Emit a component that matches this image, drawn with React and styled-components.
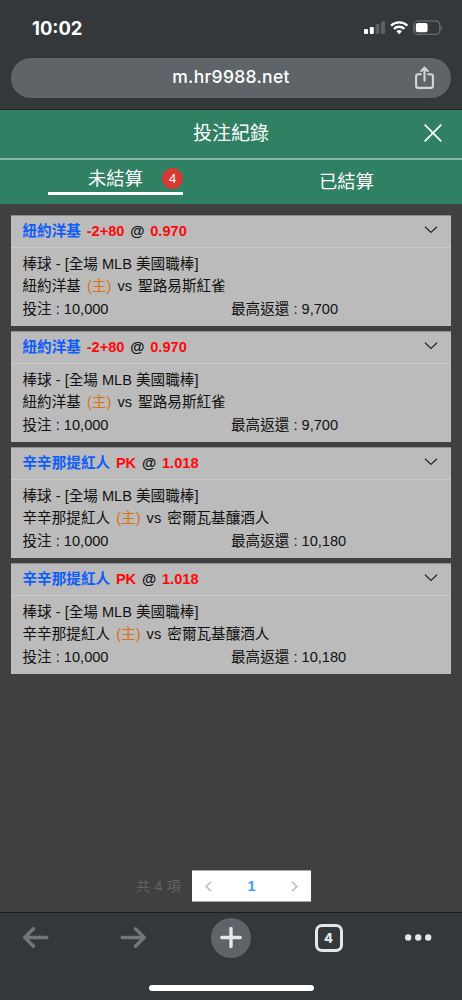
import React from 'react';
import { createGlobalStyle, styled } from 'styled-components';

const bets = [
  { id: 1, team: '紐約洋基', handicap: '-2+80', odds: '0.970', away: '聖路易斯紅雀', payout: '9,700' },
  { id: 2, team: '紐約洋基', handicap: '-2+80', odds: '0.970', away: '聖路易斯紅雀', payout: '9,700' },
  { id: 3, team: '辛辛那提紅人', handicap: 'PK', odds: '1.018', away: '密爾瓦基釀酒人', payout: '10,180' },
  { id: 4, team: '辛辛那提紅人', handicap: 'PK', odds: '1.018', away: '密爾瓦基釀酒人', payout: '10,180' },
];

function StatusIcons() {
  return (
    <svg width="80" height="16" viewBox="0 0 80 16">
      <rect x="0" y="9" width="4" height="5" rx="1" fill="#fff" />
      <rect x="5.8" y="7" width="4" height="7" rx="1" fill="#fff" />
      <rect x="11.5" y="4" width="4" height="10" rx="1" fill="#5d6061" />
      <rect x="17" y="1.2" width="4" height="12.8" rx="1" fill="#5d6061" />
      <g fill="none" stroke="#fff" strokeWidth="2.3">
        <path d="M27 5.7a11.8 11.8 0 0 1 16.4 0" />
        <path d="M30 8.9a7.4 7.4 0 0 1 10.4 0" />
      </g>
      <path d="M35.2 14.2l-2.8-2.9a4 4 0 0 1 5.6 0z" fill="#fff" />
      <rect x="49.9" y="1" width="26" height="13.2" rx="3.8" fill="none" stroke="#77797a" strokeWidth="1.1" />
      <rect x="51.8" y="2.9" width="11.8" height="9.4" rx="2" fill="#fff" />
      <path d="M77.2 5.4q2 2.2 0 4.4z" fill="#77797a" />
    </svg>
  );
}

function BetCard({ bet }) {
  return (
    <Card>
      <CardHead>
        <Pick>
          <Team>{bet.team}</Team>
          <Red>{bet.handicap}</Red>
          <span>@</span>
          <Red>{bet.odds}</Red>
        </Pick>
        <svg width="14" height="8" viewBox="0 0 14 8" fill="none" stroke="#2b2b2b" strokeWidth="1.3">
          <path d="M1 .7l6 5.7L13 .7" />
        </svg>
      </CardHead>
      <CardBody>
        <Line>棒球 - [全場 MLB 美國職棒]</Line>
        <Line $gap>
          <span>{bet.team}</span>
          <Home>(主)</Home>
          <span>vs</span>
          <span>{bet.away}</span>
        </Line>
        <Amounts>
          <span>投注 : 10,000</span>
          <span>最高返還 : {bet.payout}</span>
        </Amounts>
      </CardBody>
    </Card>
  );
}

export default function App() {
  return (
    <>
      <GlobalStyle />
      <Screen>
        <BrowserTop>
          <StatusBar>
            <Clock>10:02</Clock>
            <StatusIcons />
          </StatusBar>
          <AddressBar>
            <Url>m.hr9988.net</Url>
            <svg width="20" height="24" viewBox="0 0 20 24" fill="none" stroke="#d3d6db" strokeWidth="2.1" strokeLinecap="round" strokeLinejoin="round">
              <path d="M5.800 8.200H3.300Q1.100 8.200 1.100 10.400v9.300q0 2.200 2.200 2.200h12.400q2.200 0 2.200-2.200v-9.300q0-2.200-2.200-2.200H13.200M9.500 14.800V2M6.300 5l3.200-3.300L12.700 5" />
            </svg>
          </AddressBar>
        </BrowserTop>

        <TitleBar>
          <Title>投注紀錄</Title>
          <svg width="18" height="18" viewBox="0 0 18 18" fill="none" stroke="#fff" strokeWidth="1.7">
            <path d="M.7.7l16.600 16.600M17.300.7L.7 17.300" />
          </svg>
        </TitleBar>
        <Tabs>
          <Tab>
            <ActiveLabel>
              <span />
              <span>未結算</span>
              <Badge>4</Badge>
            </ActiveLabel>
          </Tab>
          <Tab>已結算</Tab>
        </Tabs>

        <Content>
          {bets.map((bet) => (
            <BetCard key={bet.id} bet={bet} />
          ))}
          <Pagination>
            <Total>共 4 項</Total>
            <Pager>
              <svg width="7" height="11" viewBox="0 0 7 11" fill="none" stroke="#b8bcc4" strokeWidth="1.6">
                <path d="M6 .8L1.200 5.500 6 10.200" />
              </svg>
              <PageNumber>1</PageNumber>
              <svg width="7" height="11" viewBox="0 0 7 11" fill="none" stroke="#b8bcc4" strokeWidth="1.6">
                <path d="M1 .8l4.800 4.700L1 10.200" />
              </svg>
            </Pager>
          </Pagination>
        </Content>

        <BrowserBottom>
          <Toolbar>
            <ToolItem>
              <svg width="28" height="22" viewBox="0 0 28 22" fill="none" stroke="#737678" strokeWidth="3.400" strokeLinecap="round" strokeLinejoin="round">
                <path d="M24.800 10.500H2.800M11.500 1.800L2.800 10.500l8.700 8.700" />
              </svg>
            </ToolItem>
            <ToolItem>
              <svg width="28" height="22" viewBox="0 0 28 22" fill="none" stroke="#737678" strokeWidth="3.400" strokeLinecap="round" strokeLinejoin="round">
                <path d="M2.200 10.500h22M15.500 1.800l8.700 8.700-8.700 8.700" />
              </svg>
            </ToolItem>
            <ToolItem>
              <NewTab>
                <svg width="22" height="22" viewBox="0 0 22 22" stroke="#e4e6ea" strokeWidth="3.400" strokeLinecap="round">
                  <path d="M1.800 10.500h18.400M11 1.500v18" />
                </svg>
              </NewTab>
            </ToolItem>
            <ToolItem>
              <TabCount>4</TabCount>
            </ToolItem>
            <ToolItem>
              <svg width="28" height="8" viewBox="0 0 28 8" fill="#e4e6ea">
                <circle cx="4.200" cy="3.500" r="3.200" />
                <circle cx="14.200" cy="3.500" r="3.200" />
                <circle cx="24.200" cy="3.500" r="3.200" />
              </svg>
            </ToolItem>
          </Toolbar>
          <HomeIndicator />
        </BrowserBottom>
      </Screen>
    </>
  );
}

const GlobalStyle = createGlobalStyle`
  * {
    box-sizing: border-box;
  }
  body {
    margin: 0;
    background: #404040;
    font-family: 'Liberation Sans', 'Noto Sans CJK TC', sans-serif;
  }
  svg {
    display: block;
    flex-shrink: 0;
  }
`;

const Screen = styled.div`
  display: flex;
  flex-direction: column;
  width: 462px;
  height: 1000px;
  overflow: hidden;
`;

const BrowserTop = styled.div`
  height: 110px;
  flex-shrink: 0;
  padding: 0 11px;
  background: #34383b;
  border-bottom: 1px solid #1d2123;
`;

const StatusBar = styled.div`
  display: flex;
  justify-content: space-between;
  align-items: center;
  height: 58px;
  padding: 0 7px 3px 21px;
`;

const Clock = styled.span`
  font-family: Inter, sans-serif;
  font-size: 18.4px;
  font-weight: 700;
  color: #fff;
`;

const AddressBar = styled.div`
  display: grid;
  grid-template-columns: 36px 1fr 36px;
  align-items: center;
  height: 40px;
  border-radius: 20px;
  background: #5f6468;

  svg {
    grid-column: 3;
  }
`;

const Url = styled.span`
  grid-column: 2;
  padding-bottom: 3px;
  font-family: Inter, sans-serif;
  font-size: 17.5px;
  font-weight: 500;
  letter-spacing: 0.3px;
  text-align: center;
  color: #fff;
`;

const TitleBar = styled.div`
  display: grid;
  grid-template-columns: 38px 1fr 38px;
  align-items: center;
  height: 50px;
  flex-shrink: 0;
  padding-bottom: 2px;
  background: #308064;
  border-bottom: 2px solid #8cb5a5;

  svg {
    grid-column: 3;
  }
`;

const Title = styled.div`
  grid-column: 2;
  padding-top: 2px;
  font-size: 19px;
  line-height: 24px;
  text-align: center;
  color: #fff;
`;

const Tabs = styled.div`
  display: flex;
  height: 44px;
  flex-shrink: 0;
  background: #308064;
`;

const Tab = styled.div`
  flex: 1;
  display: flex;
  justify-content: center;
  align-items: center;
  font-size: 18.3px;
  line-height: 24px;
  color: #fff;
`;

const ActiveLabel = styled.div`
  display: grid;
  grid-template-columns: 21px 1fr 21px;
  align-items: center;
  width: 135px;
  height: 29px;
  margin-top: -4px;
  border-bottom: 3px solid #fff;
  text-align: center;
`;

const Badge = styled.span`
  width: 21px;
  height: 21px;
  border-radius: 50%;
  background: #d73935;
  font-size: 13px;
  line-height: 21px;
`;

const Content = styled.div`
  flex: 1;
  display: flex;
  flex-direction: column;
  gap: 5px;
  padding: 11px 11px 10px;
  background: #404040;
`;

const Card = styled.div`
  height: 111px;
  background: #bbb;
  border-top: 1px solid #8d8d8d;
  font-size: 14.6px;
  color: #111;
`;

const CardHead = styled.div`
  display: flex;
  justify-content: space-between;
  align-items: center;
  height: 32px;
  padding: 0 13px 4px 11.5px;
  border-bottom: 1px solid #cbcbcb;
`;

const Pick = styled.div`
  display: flex;
  gap: 5.8px;
  padding-top: 3px;
  font-weight: 700;
  line-height: 22px;
`;

const Team = styled.span`
  color: #0d5dfb;
`;

const Red = styled.span`
  color: #ff0808;
`;

const CardBody = styled.div`
  padding: 5px 11.5px 0;
`;

const Line = styled.div`
  display: flex;
  gap: ${({ $gap }) => ($gap ? '6.1px' : '0')};
  height: 22.3px;
  line-height: 22.3px;
  white-space: nowrap;
`;

const Home = styled.span`
  color: #dc7210;
`;

const Amounts = styled(Line)`
  display: grid;
  grid-template-columns: 208.5px 1fr;
`;

const Pagination = styled.div`
  display: flex;
  align-items: center;
  gap: 11px;
  margin-top: auto;
  padding-left: 125px;
`;

const Total = styled.span`
  width: 45px;
  padding-bottom: 3px;
  font-size: 14.2px;
  letter-spacing: 0.2px;
  white-space: nowrap;
  color: #606266;
`;

const Pager = styled.div`
  display: flex;
  justify-content: space-between;
  align-items: center;
  width: 119px;
  height: 32px;
  padding: 0 13px;
  background: #fff;
  border: solid #aaa;
  border-width: 1px 0;
`;

const PageNumber = styled.span`
  font-size: 14.6px;
  font-weight: 700;
  color: #409eff;
`;

const BrowserBottom = styled.div`
  height: 88px;
  flex-shrink: 0;
  background: #34383b;
  border-top: 1px solid #191b1c;
`;

const Toolbar = styled.div`
  display: grid;
  grid-template-columns: 98px 97px 98px 97px 82px;
  height: 50px;
  margin-left: -13px;
`;

const ToolItem = styled.div`
  display: flex;
  justify-content: center;
  align-items: center;
`;

const NewTab = styled.div`
  display: flex;
  justify-content: center;
  align-items: center;
  width: 40px;
  height: 40px;
  border-radius: 50%;
  background: #5f6468;
`;

const TabCount = styled.div`
  width: 28px;
  height: 28px;
  border: 3px solid #e4e6ea;
  border-radius: 7px;
  font-family: Inter, sans-serif;
  font-size: 13px;
  font-weight: 800;
  line-height: 22px;
  text-align: center;
  color: #e4e6ea;
`;

const HomeIndicator = styled.div`
  width: 165px;
  height: 6px;
  margin: 22px auto 0;
  border-radius: 3px;
  background: #fff;
`;
